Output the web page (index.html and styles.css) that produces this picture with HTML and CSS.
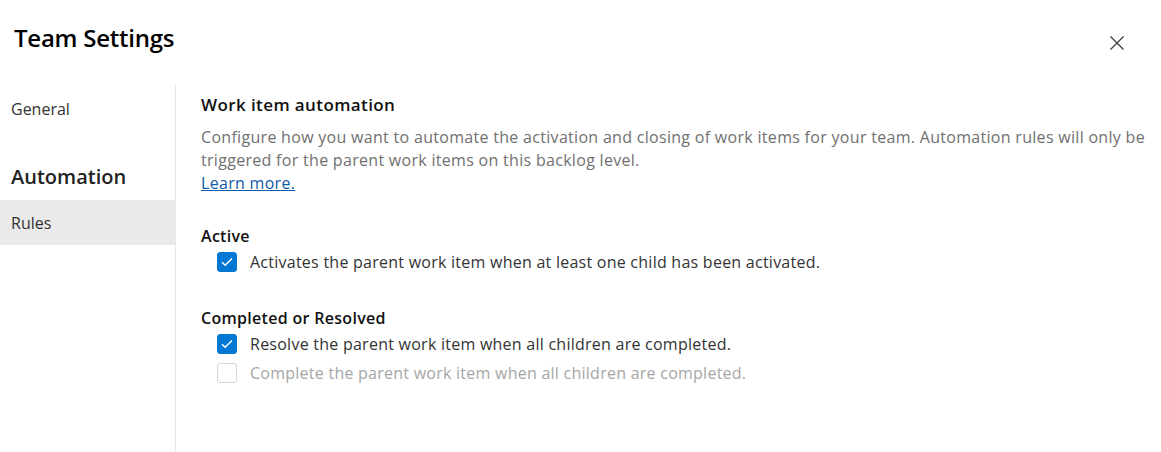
FILE: index.html
```html
<!DOCTYPE html>
<html lang="en">
<head>
<meta charset="utf-8">
<title>Team Settings</title>
<link rel="stylesheet" href="styles.css">
</head>
<body>
<div class="dialog">
  <header class="header">
    <h1 class="title">Team Settings</h1>
    <button class="close" aria-label="Close">
      <svg width="14" height="14" viewBox="0 0 14 14"><path d="M0.5 0.5 L13.5 13.5 M13.5 0.5 L0.5 13.5" stroke="#3b3b3b" stroke-width="1.3" fill="none"/></svg>
    </button>
  </header>
  <div class="body">
    <nav class="nav">
      <div class="nav-item nav-first">General</div>
      <div class="nav-group">Automation</div>
      <div class="nav-item selected">Rules</div>
    </nav>
    <main class="content">
      <h2 class="section-title">Work item automation</h2>
      <p class="desc">Configure how you want to automate the activation and closing of work items for your team. Automation rules will only be triggered for the parent work items on this backlog level.<br><a class="link" href="#">Learn more.</a></p>

      <h3 class="group-title group-active">Active</h3>
      <label class="check">
        <span class="box checked"><svg width="20" height="20" viewBox="0 0 20 20"><path d="M5 10.3 L8.2 13.3 L15 6.6" stroke="#fff" stroke-width="1.4" fill="none"/></svg></span>
        <span class="check-text">Activates the parent work item when at least one child has been activated.</span>
      </label>

      <h3 class="group-title group-completed">Completed or Resolved</h3>
      <label class="check">
        <span class="box checked"><svg width="20" height="20" viewBox="0 0 20 20"><path d="M5 10.3 L8.2 13.3 L15 6.6" stroke="#fff" stroke-width="1.4" fill="none"/></svg></span>
        <span class="check-text">Resolve the parent work item when all children are completed.</span>
      </label>
      <label class="check disabled">
        <span class="box"></span>
        <span class="check-text">Complete the parent work item when all children are completed.</span>
      </label>
    </main>
  </div>
</div>
</body>
</html>
```

FILE: styles.css
```css
* { box-sizing: border-box; }
html, body { margin: 0; padding: 0; background: #fff; }
body {
  font-family: "Open Sans", "Noto Sans", sans-serif;
  color: #323130;
  width: 1161px;
  height: 452px;
  overflow: hidden;
}
.dialog { display: flex; flex-direction: column; height: 452px; }
.header {
  display: flex;
  align-items: center;
  justify-content: space-between;
  height: 85px;
  padding: 0 37px 0 14px;
}
.title {
  margin: 0;
  font-size: 24px;
  font-weight: 600;
  color: #000;
  letter-spacing: -0.25px;
  position: relative;
  top: -5px;
}
.close {
  border: 0;
  background: transparent;
  padding: 0;
  width: 14px;
  height: 14px;
  display: flex;
  cursor: pointer;
}
.body { display: flex; flex: 1; }
.nav {
  width: 176px;
  border-right: 1px solid #e6e6e6;
  display: flex;
  flex-direction: column;
}
.nav-item {
  font-size: 16px;
  padding: 0 11px;
  height: 45px;
  display: flex;
  align-items: center;
  color: #323130;
}
.nav-first { margin-top: 1px; }
.nav-group {
  font-size: 20px;
  font-weight: 600;
  color: #222;
  padding: 0 11px;
  margin-top: 22px;
  height: 47px;
  display: flex;
  align-items: center;
}
.nav-item.selected { background: #eaeaea; }
.content {
  flex: 1;
  padding: 9px 0 0 25px;
}
.section-title {
  margin: 0;
  font-size: 17px;
  font-weight: 600;
  color: #111;
  line-height: 22px;
  letter-spacing: 0.4px;
}
.desc {
  margin: 10px 0 0;
  font-size: 16px;
  line-height: 23px;
  color: #707070;
  letter-spacing: 0.3px;
}
.link { color: #0f5aa6; text-decoration: underline; }
.group-title {
  margin: 0;
  font-size: 16px;
  font-weight: 600;
  color: #111;
  line-height: 22px;
  letter-spacing: 0.3px;
}
.group-active { margin-top: 30px; }
.group-completed { margin-top: 31px; }
.check {
  display: flex;
  align-items: center;
  height: 29px;
  padding-left: 16px;
  font-size: 16px;
  color: #333;
  letter-spacing: 0.25px;
}
.box {
  width: 20px;
  height: 20px;
  border-radius: 3px;
  border: 1px solid #c8c8c8;
  display: flex;
  align-items: center;
  justify-content: center;
  margin-right: 13px;
  flex: none;
  overflow: hidden;
}
.box.checked { background: #0078d4; border-color: #0078d4; }
.box.checked svg { margin: -1px; flex: none; }
.check.disabled { color: #a6a6a6; }
.check.disabled .box { border-color: #d6d6d6; }
```
